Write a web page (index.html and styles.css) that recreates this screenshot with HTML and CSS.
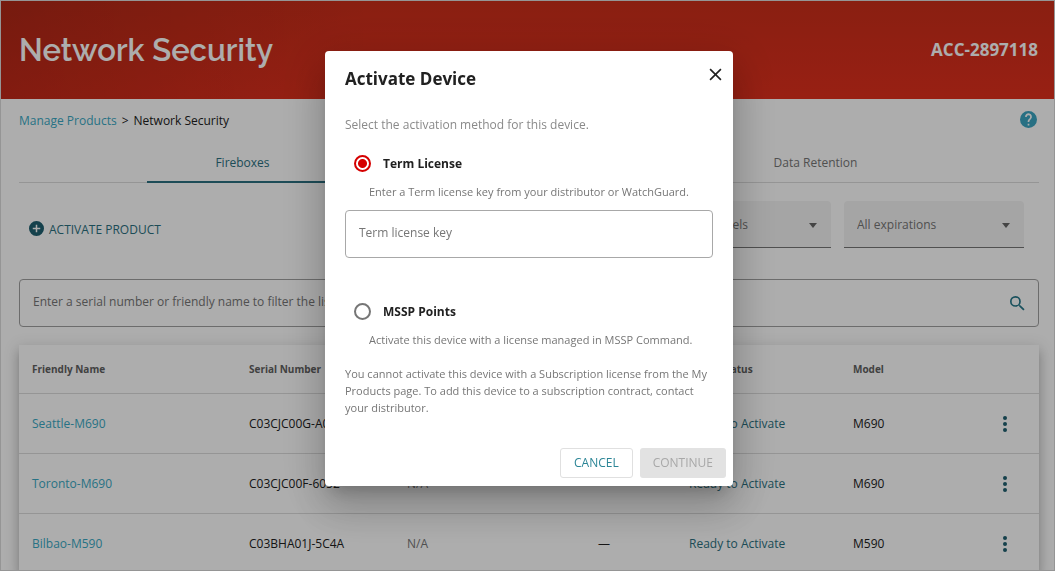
FILE: index.html
```html
<!DOCTYPE html>
<html lang="en">
<head>
    <meta charset="UTF-8">
    <meta name="viewport" content="width=device-width, initial-scale=1">
    <title>Network Security</title>
    <link rel="stylesheet" href="styles.css">
</head>
<body>
    <div class="page">
        <header class="banner">
            <h1>Network Security</h1>
            <span class="account">ACC-2897118</span>
        </header>

        <main class="content">
            <div class="topline">
                <nav class="breadcrumb">
                    <a href="#">Manage Products</a>
                    <span class="separator">&gt;</span>
                    <span>Network Security</span>
                </nav>
                <a class="help" href="#" aria-label="Help">
                    <svg viewBox="2 2 20 20"><path d="M12 2a10 10 0 1 0 0 20 10 10 0 0 0 0-20zm1 17h-2v-2h2v2zm2.07-7.75l-.9.92C13.45 12.9 13 13.5 13 15h-2v-.5c0-1.1.45-2.1 1.17-2.83l1.24-1.26A2 2 0 1 0 10 9H8a4 4 0 1 1 7.07 2.25z"/></svg>
                </a>
            </div>

            <nav class="tabs">
                <a class="tab active" href="#">Fireboxes</a>
                <a class="tab" href="#">Access Points</a>
                <a class="tab" href="#">Services</a>
                <a class="tab" href="#">Data Retention</a>
            </nav>

            <div class="toolbar">
                <button class="activate">
                    <svg viewBox="2 2 20 20"><path d="M12 2a10 10 0 1 0 0 20 10 10 0 0 0 0-20zm5 11h-4v4h-2v-4H7v-2h4V7h2v4h4v2z"/></svg>
                    ACTIVATE PRODUCT
                </button>
                <div class="filters">
                    <div class="select models">
                        <select aria-label="Models"><option>All models</option></select>
                    </div>
                    <div class="select">
                        <select aria-label="Expirations"><option>All expirations</option></select>
                    </div>
                </div>
            </div>

            <div class="search">
                <input type="text" aria-label="Filter the list" placeholder="Enter a serial number or friendly name to filter the list">
                <button aria-label="Search">
                    <svg viewBox="3 3 18 18"><path d="M15.5 14h-.79l-.28-.27A6.47 6.47 0 0 0 16 9.5 6.5 6.5 0 1 0 9.5 16c1.61 0 3.09-.59 4.23-1.57l.27.28v.79l5 4.99L20.49 19l-4.99-5zm-6 0a4.5 4.5 0 1 1 0-9 4.5 4.5 0 0 1 0 9z"/></svg>
                </button>
            </div>

            <table class="products">
                <thead>
                    <tr>
                        <th class="name">Friendly Name</th>
                        <th class="serial">Serial Number</th>
                        <th class="contract"></th>
                        <th class="expires"></th>
                        <th class="status">Order Status</th>
                        <th>Model</th>
                        <th class="menu"></th>
                    </tr>
                </thead>
                <tbody>
                    <tr>
                        <td><a href="#">Seattle-M690</a></td>
                        <td>C03CJC00G-A082</td>
                        <td class="muted">N/A</td>
                        <td>—</td>
                        <td><a class="ready" href="#">Ready to Activate</a></td>
                        <td>M690</td>
                        <td><button class="more" aria-label="More actions"><svg viewBox="0 0 6 16"><circle cx="3" cy="2" r="2"/><circle cx="3" cy="8" r="2"/><circle cx="3" cy="14" r="2"/></svg></button></td>
                    </tr>
                    <tr>
                        <td><a href="#">Toronto-M690</a></td>
                        <td>C03CJC00F-6052</td>
                        <td class="muted">N/A</td>
                        <td>—</td>
                        <td><a class="ready" href="#">Ready to Activate</a></td>
                        <td>M690</td>
                        <td><button class="more" aria-label="More actions"><svg viewBox="0 0 6 16"><circle cx="3" cy="2" r="2"/><circle cx="3" cy="8" r="2"/><circle cx="3" cy="14" r="2"/></svg></button></td>
                    </tr>
                    <tr>
                        <td><a href="#">Bilbao-M590</a></td>
                        <td>C03BHA01J-5C4A</td>
                        <td class="muted">N/A</td>
                        <td>—</td>
                        <td><a class="ready" href="#">Ready to Activate</a></td>
                        <td>M590</td>
                        <td><button class="more" aria-label="More actions"><svg viewBox="0 0 6 16"><circle cx="3" cy="2" r="2"/><circle cx="3" cy="8" r="2"/><circle cx="3" cy="14" r="2"/></svg></button></td>
                    </tr>
                </tbody>
            </table>
        </main>
    </div>

    <div class="backdrop">
        <form class="dialog" role="dialog" aria-modal="true" aria-labelledby="dialogTitle">
            <div class="dialog-header">
                <h2 id="dialogTitle">Activate Device</h2>
                <button type="button" class="close" aria-label="Close">
                    <svg viewBox="0 0 12 12"><path d="M1 1l10 10M11 1L1 11"/></svg>
                </button>
            </div>
            <p class="intro">Select the activation method for this device.</p>

            <div class="option">
                <input type="radio" name="method" id="term" checked>
                <label for="term">Term License</label>
            </div>
            <p class="hint">Enter a Term license key from your distributor or WatchGuard.</p>
            <input class="key" type="text" aria-label="Term license key" placeholder="Term license key">

            <div class="option">
                <input type="radio" name="method" id="mssp">
                <label for="mssp">MSSP Points</label>
            </div>
            <p class="hint">Activate this device with a license managed in MSSP Command.</p>

            <p class="note">You cannot activate this device with a Subscription license from the My Products page. To add this device to a subscription contract, contact your distributor.</p>

            <div class="actions">
                <button type="button" class="cancel">CANCEL</button>
                <button type="submit" class="continue" disabled>CONTINUE</button>
            </div>
        </form>
    </div>
</body>
</html>
```
FILE: styles.css
```css
* {
    box-sizing: border-box;
}

body {
    margin: 0;
    font-family: "Open Sans", "Noto Sans", sans-serif;
    font-size: 12px;
    line-height: 18px;
    color: #212121;
    background: #fff;
}

h1, h2, p {
    margin: 0;
}

a {
    color: #3aa9c4;
    text-decoration: none;
}

button, input, select {
    font: inherit;
    color: inherit;
}

button {
    padding: 0;
    border: none;
    background: none;
    cursor: pointer;
}

svg {
    display: block;
}

/* page is not scrollable while the dialog is open */
.page {
    height: 100vh;
    overflow: hidden;
    border: 1px solid #dcdcdc;
}

.banner {
    display: flex;
    align-items: center;
    justify-content: space-between;
    height: 98px;
    padding: 0 16px 0 18px;
    color: #fff;
    background: linear-gradient(to right, rgba(0, 0, 0, 0.14), transparent 35%), linear-gradient(#cb2e1a, #e1301d);
}

.banner h1 {
    font-family: Raleway, Lato, sans-serif;
    font-size: 31px;
    line-height: 40px;
    font-weight: 600;
}

.account {
    font-size: 17px;
    font-weight: 700;
}

.content {
    padding: 9px 15px 0 18px;
}

.topline {
    display: flex;
    align-items: center;
    justify-content: space-between;
}

.breadcrumb {
    display: flex;
    gap: 5px;
    padding-top: 4px;
}

.help {
    margin-right: 2px;
}

.help svg {
    width: 17px;
    height: 17px;
    fill: #3ba5c2;
}

.tabs {
    display: flex;
    justify-content: center;
    margin-top: 11px;
    border-bottom: 1px solid #dcdcdc;
}

.tab {
    flex: 0 1 191px;
    height: 42px;
    line-height: 44px;
    margin-bottom: -1px;
    border-bottom: 2px solid transparent;
    text-align: center;
    color: #767676;
}

.tab.active {
    color: #2b7080;
    border-color: #2b7080;
}

.toolbar {
    display: flex;
    align-items: center;
    justify-content: space-between;
    margin-top: 18px;
    padding: 0 15px 0 10px;
}

.activate {
    display: flex;
    align-items: flex-start;
    gap: 5px;
    padding-top: 10px;
    color: #2b7080;
}

.activate svg {
    width: 15px;
    height: 15px;
    fill: #1f6070;
}

.filters {
    display: flex;
    gap: 13px;
}

.select {
    position: relative;
    width: 180px;
}

.select.models {
    width: 154px;
}

.select select {
    width: 100%;
    height: 47px;
    padding: 2px 13px 0;
    appearance: none;
    border: none;
    border-bottom: 1px solid #767676;
    border-radius: 4px 4px 0 0;
    background: #f4f4f4;
    color: #767676;
}

.select::after {
    content: "";
    position: absolute;
    top: 22px;
    right: 14px;
    border: 4px solid transparent;
    border-top: 5px solid #666;
    border-bottom: none;
    pointer-events: none;
}

.search {
    display: flex;
    align-items: center;
    height: 48px;
    margin-top: 31px;
    padding: 0 13px;
    border: 1px solid #a0a0a0;
    border-radius: 4px;
}

.search input {
    flex: 1;
    padding: 0 0 3px;
    border: none;
    outline: none;
    background: none;
}

input::placeholder {
    color: #767676;
    opacity: 1;
}

.search svg {
    width: 15px;
    height: 15px;
    fill: #26788a;
}

.products {
    width: 100%;
    margin-top: 18px;
    border-collapse: collapse;
    table-layout: fixed;
    box-shadow: 0 5px 5px -3px rgba(0, 0, 0, 0.2), 0 8px 10px 1px rgba(0, 0, 0, 0.14), 0 3px 14px 2px rgba(0, 0, 0, 0.12);
}

.products th {
    height: 48px;
    padding: 0 0 0 13px;
    font-size: 10px;
    text-align: left;
    color: #616161;
}

.products td {
    height: 60px;
    padding: 2px 0 0 13px;
    border-top: 1px solid #dcdcdc;
}

.products .name {
    width: 217px;
}

.products .serial {
    width: 158px;
}

.products .contract {
    width: 191px;
}

.products .expires {
    width: 91px;
}

.products .status {
    width: 164px;
}

.products .menu {
    width: 50px;
}

.products .muted {
    color: #767676;
}

.products .ready {
    color: #2b7080;
}

.more {
    display: block;
}

.more svg {
    width: 6px;
    height: 16px;
    fill: #1f6070;
}

.backdrop {
    position: fixed;
    inset: 0;
    display: flex;
    align-items: flex-start;
    justify-content: center;
    padding: 51px 0 0 3px;
    background: rgba(0, 0, 0, 0.32);
}

.dialog {
    width: 408px;
    padding: 17px 20px 8px;
    border-radius: 4px;
    background: #fff;
    color: #767676;
    box-shadow: 0 11px 15px -7px rgba(0, 0, 0, 0.2), 0 24px 38px 3px rgba(0, 0, 0, 0.14), 0 9px 46px 8px rgba(0, 0, 0, 0.12);
}

.dialog-header {
    display: flex;
    align-items: flex-start;
    justify-content: space-between;
}

.dialog-header h2 {
    font-size: 17px;
    line-height: 22px;
    color: #212121;
}

.close {
    margin-right: -9px;
}

.close svg {
    width: 13px;
    height: 13px;
    stroke: #212121;
    stroke-width: 1.5;
}

.intro {
    margin-top: 26px;
    color: #8a8a8a;
}

.option {
    display: flex;
    align-items: center;
    gap: 12px;
    margin-top: 19px;
    padding-left: 9px;
    font-weight: 700;
    color: #212121;
}

.option label {
    padding-top: 2px;
}

.option input {
    width: 17px;
    height: 17px;
    margin: 0;
    appearance: none;
    border: 2px solid #767676;
    border-radius: 50%;
}

.option input:checked {
    border-color: #d50000;
    background: radial-gradient(#d50000 4px, transparent 5px);
}

.hint {
    margin-top: 10px;
    padding-left: 24px;
    font-size: 11px;
    line-height: 17px;
}

.key {
    display: block;
    width: 100%;
    height: 48px;
    margin: 10px 0 43px;
    padding: 0 13px 3px;
    border: 1px solid #a8a8a8;
    border-radius: 4px;
}

.note {
    margin-top: 17px;
    font-size: 11px;
    line-height: 17px;
}

.actions {
    display: flex;
    justify-content: flex-end;
    gap: 7px;
    margin: 32px -13px 0 0;
}

.actions button {
    height: 30px;
    padding: 0 13px;
    border-radius: 3px;
}

.cancel {
    border: 1px solid #e0e0e0;
    color: #2b8596;
}

.continue {
    background: #e2e2e2;
    color: #a8a8a8;
}
```
